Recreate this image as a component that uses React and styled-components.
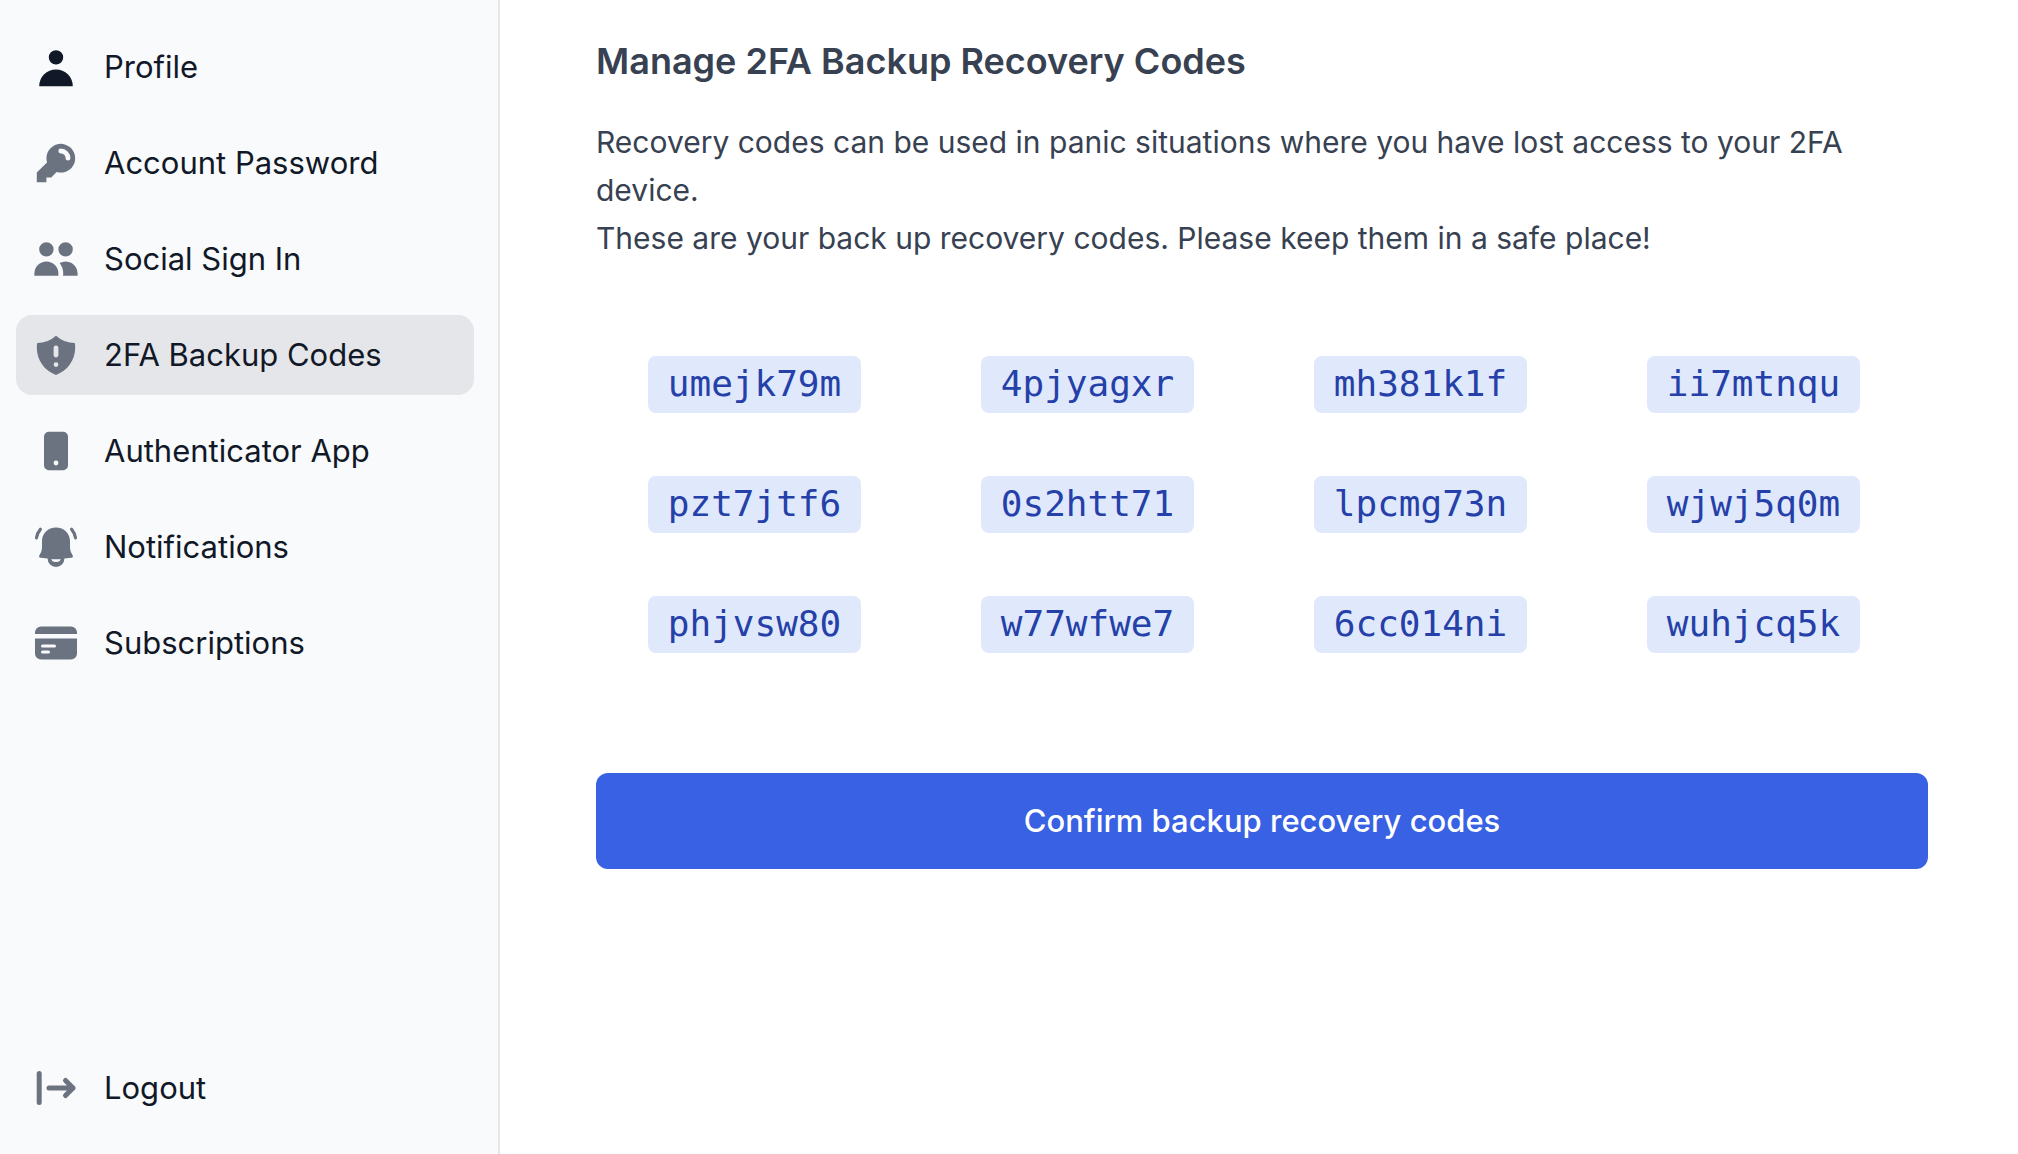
import React from "react";
import styled, { createGlobalStyle } from "styled-components";
import { HiUser, HiUsers, HiDeviceMobile } from "react-icons/hi";

const GlobalStyle = createGlobalStyle`
  * { box-sizing: border-box; }
  body {
    margin: 0;
    background: #ffffff;
    font-family: Inter, "Liberation Sans", sans-serif;
    font-size: 31px;
    line-height: 48px;
  }
`;

const Layout = styled.div`
  display: flex;
  min-height: 100vh;
`;

const Sidebar = styled.nav`
  display: flex;
  flex: 0 0 500px;
  flex-direction: column;
  justify-content: space-between;
  padding: 27px 24px 26px 16px;
  background: #f9fafc;
  border-right: 2px solid #e5e7eb;
`;

const NavList = styled.ul`
  display: flex;
  flex-direction: column;
  gap: 16px;
  margin: 0;
  padding: 0;
  list-style: none;
`;

const NavLink = styled.a`
  display: flex;
  align-items: center;
  gap: 24px;
  height: 80px;
  padding: 0 16px;
  border-radius: 16px;
  background: ${(p) => (p.$active ? "#e5e6ea" : "transparent")};
  color: #111827;
  text-decoration: none;

  svg {
    flex: none;
    width: 48px;
    height: 48px;
    color: ${(p) => (p.$dark ? "#111827" : "#6b7280")};
  }
`;

const Main = styled.main`
  flex: 1;
  min-width: 0;
  padding: 31px 90px 32px 96px;
  color: #374151;
`;

const Title = styled.h1`
  margin: 0 0 27px;
  font-size: 36px;
  line-height: 60px;
  font-weight: 600;
`;

const Text = styled.p`
  margin: 0;
  font-size: 30px;
`;

const CodeGrid = styled.ul`
  display: grid;
  grid-template-columns: repeat(4, 1fr);
  row-gap: 63px;
  margin: 94px 0 120px;
  padding: 0;
  list-style: none;
`;

const CodeCell = styled.li`
  display: flex;
  justify-content: center;
  padding-right: 16px;
`;

const Code = styled.code`
  padding: 4px 20px 5px;
  border-radius: 8px;
  background: #dfe9fb;
  color: #2540a8;
  font-family: "DejaVu Sans Mono", monospace;
  font-size: 36px;
`;

const ConfirmButton = styled.button`
  width: 100%;
  height: 96px;
  border: 0;
  border-radius: 12px;
  background: #3861e3;
  color: #ffffff;
  font: inherit;
  font-weight: 500;
  cursor: pointer;
`;

const KeyIcon = () => (
  <svg viewBox="0 0 20 20" fill="currentColor" fillRule="evenodd" aria-hidden="true">
    <path d="M18 8a6 6 0 0 1-7.743 5.743L8 16H6v2H2v-4l4.257-4.257A6 6 0 1 1 18 8zm-6-4a1 1 0 1 0 0 2 2 2 0 0 1 2 2 1 1 0 1 0 2 0 4 4 0 0 0-4-4z" />
  </svg>
);

const ShieldIcon = () => (
  <svg viewBox="0 0 20 20" fill="currentColor" fillRule="evenodd" aria-hidden="true">
    <path d="M10 1.944A11.954 11.954 0 0 1 2.166 5C2.056 5.649 2 6.319 2 7c0 5.225 3.34 9.67 8 11.317C14.66 16.67 18 12.225 18 7c0-.682-.057-1.35-.166-2.001A11.954 11.954 0 0 1 10 1.944zM11 14a1 1 0 1 1-2 0 1 1 0 0 1 2 0zm0-7a1 1 0 1 0-2 0v3a1 1 0 1 0 2 0V7z" />
  </svg>
);

const BellIcon = () => (
  <svg viewBox="0 0 24 24" fill="currentColor" fillRule="evenodd" aria-hidden="true">
    <path d="M12 2.250c4 0 7 3 7 6.750v3c0 1.600.5 2.900 1.300 4.100.4.700.1 1.150-.6 1.250l-3.500.4a4.200 4.200 0 0 1-8.400 0l-3.500-.4c-.7-.1-1-.55-.6-1.250C4.500 14.900 5 13.600 5 12V9c0-3.750 3-6.750 7-6.750zM9.750 18a2.250 1.500 0 0 0 4.500 0q-2.250.2-4.500 0z" />
    <path d="M4.200 3.100A9 9 0 0 0 2.250 7.400M19.800 3.100A9 9 0 0 1 21.750 7.400" fill="none" stroke="currentColor" strokeWidth="1.6" strokeLinecap="round" />
  </svg>
);

const CardIcon = () => (
  <svg viewBox="0 0 24 24" fill="currentColor" fillRule="evenodd" aria-hidden="true">
    <path d="M4.500 3.750a3 3 0 0 0-3 3v.75h21v-.75a3 3 0 0 0-3-3h-15z" />
    <path d="M22.500 9.750h-21v7.500a3 3 0 0 0 3 3h15a3 3 0 0 0 3-3v-7.500zm-18 3.750a.75.75 0 0 1 .75-.75h6a.75.75 0 0 1 0 1.500h-6a.75.75 0 0 1-.75-.75zm.75 2.250a.75.75 0 0 0 0 1.500h3a.75.75 0 0 0 0-1.500h-3z" />
  </svg>
);

const LogoutIcon = () => (
  <svg viewBox="0 0 48 48" fill="none" stroke="currentColor" strokeWidth="5" strokeLinecap="round" strokeLinejoin="round" aria-hidden="true">
    <path d="M7.200 9.500v29M17 24h24M33.500 16.500 41 24l-7.500 7.500" />
  </svg>
);

const navItems = [
  { label: "Profile", Icon: HiUser, dark: true },
  { label: "Account Password", Icon: KeyIcon },
  { label: "Social Sign In", Icon: HiUsers },
  { label: "2FA Backup Codes", Icon: ShieldIcon, active: true },
  { label: "Authenticator App", Icon: HiDeviceMobile },
  { label: "Notifications", Icon: BellIcon },
  { label: "Subscriptions", Icon: CardIcon },
];

const codes = [
  "umejk79m", "4pjyagxr", "mh381k1f", "ii7mtnqu",
  "pzt7jtf6", "0s2htt71", "lpcmg73n", "wjwj5q0m",
  "phjvsw80", "w77wfwe7", "6cc014ni", "wuhjcq5k",
];

export default function App() {
  return (
    <>
      <GlobalStyle />
      <Layout>
        <Sidebar>
          <NavList>
            {navItems.map(({ label, Icon, dark, active }) => (
              <li key={label}>
                <NavLink href="#" $active={active} $dark={dark} aria-current={active ? "page" : undefined}>
                  <Icon />
                  {label}
                </NavLink>
              </li>
            ))}
          </NavList>
          <NavLink href="#">
            <LogoutIcon />
            Logout
          </NavLink>
        </Sidebar>
        <Main>
          <Title>Manage 2FA Backup Recovery Codes</Title>
          <Text>
            Recovery codes can be used in panic situations where you have lost access to your 2FA device.
          </Text>
          <Text>These are your back up recovery codes. Please keep them in a safe place!</Text>
          <CodeGrid>
            {codes.map((code) => (
              <CodeCell key={code}>
                <Code>{code}</Code>
              </CodeCell>
            ))}
          </CodeGrid>
          <ConfirmButton type="button">Confirm backup recovery codes</ConfirmButton>
        </Main>
      </Layout>
    </>
  );
}
